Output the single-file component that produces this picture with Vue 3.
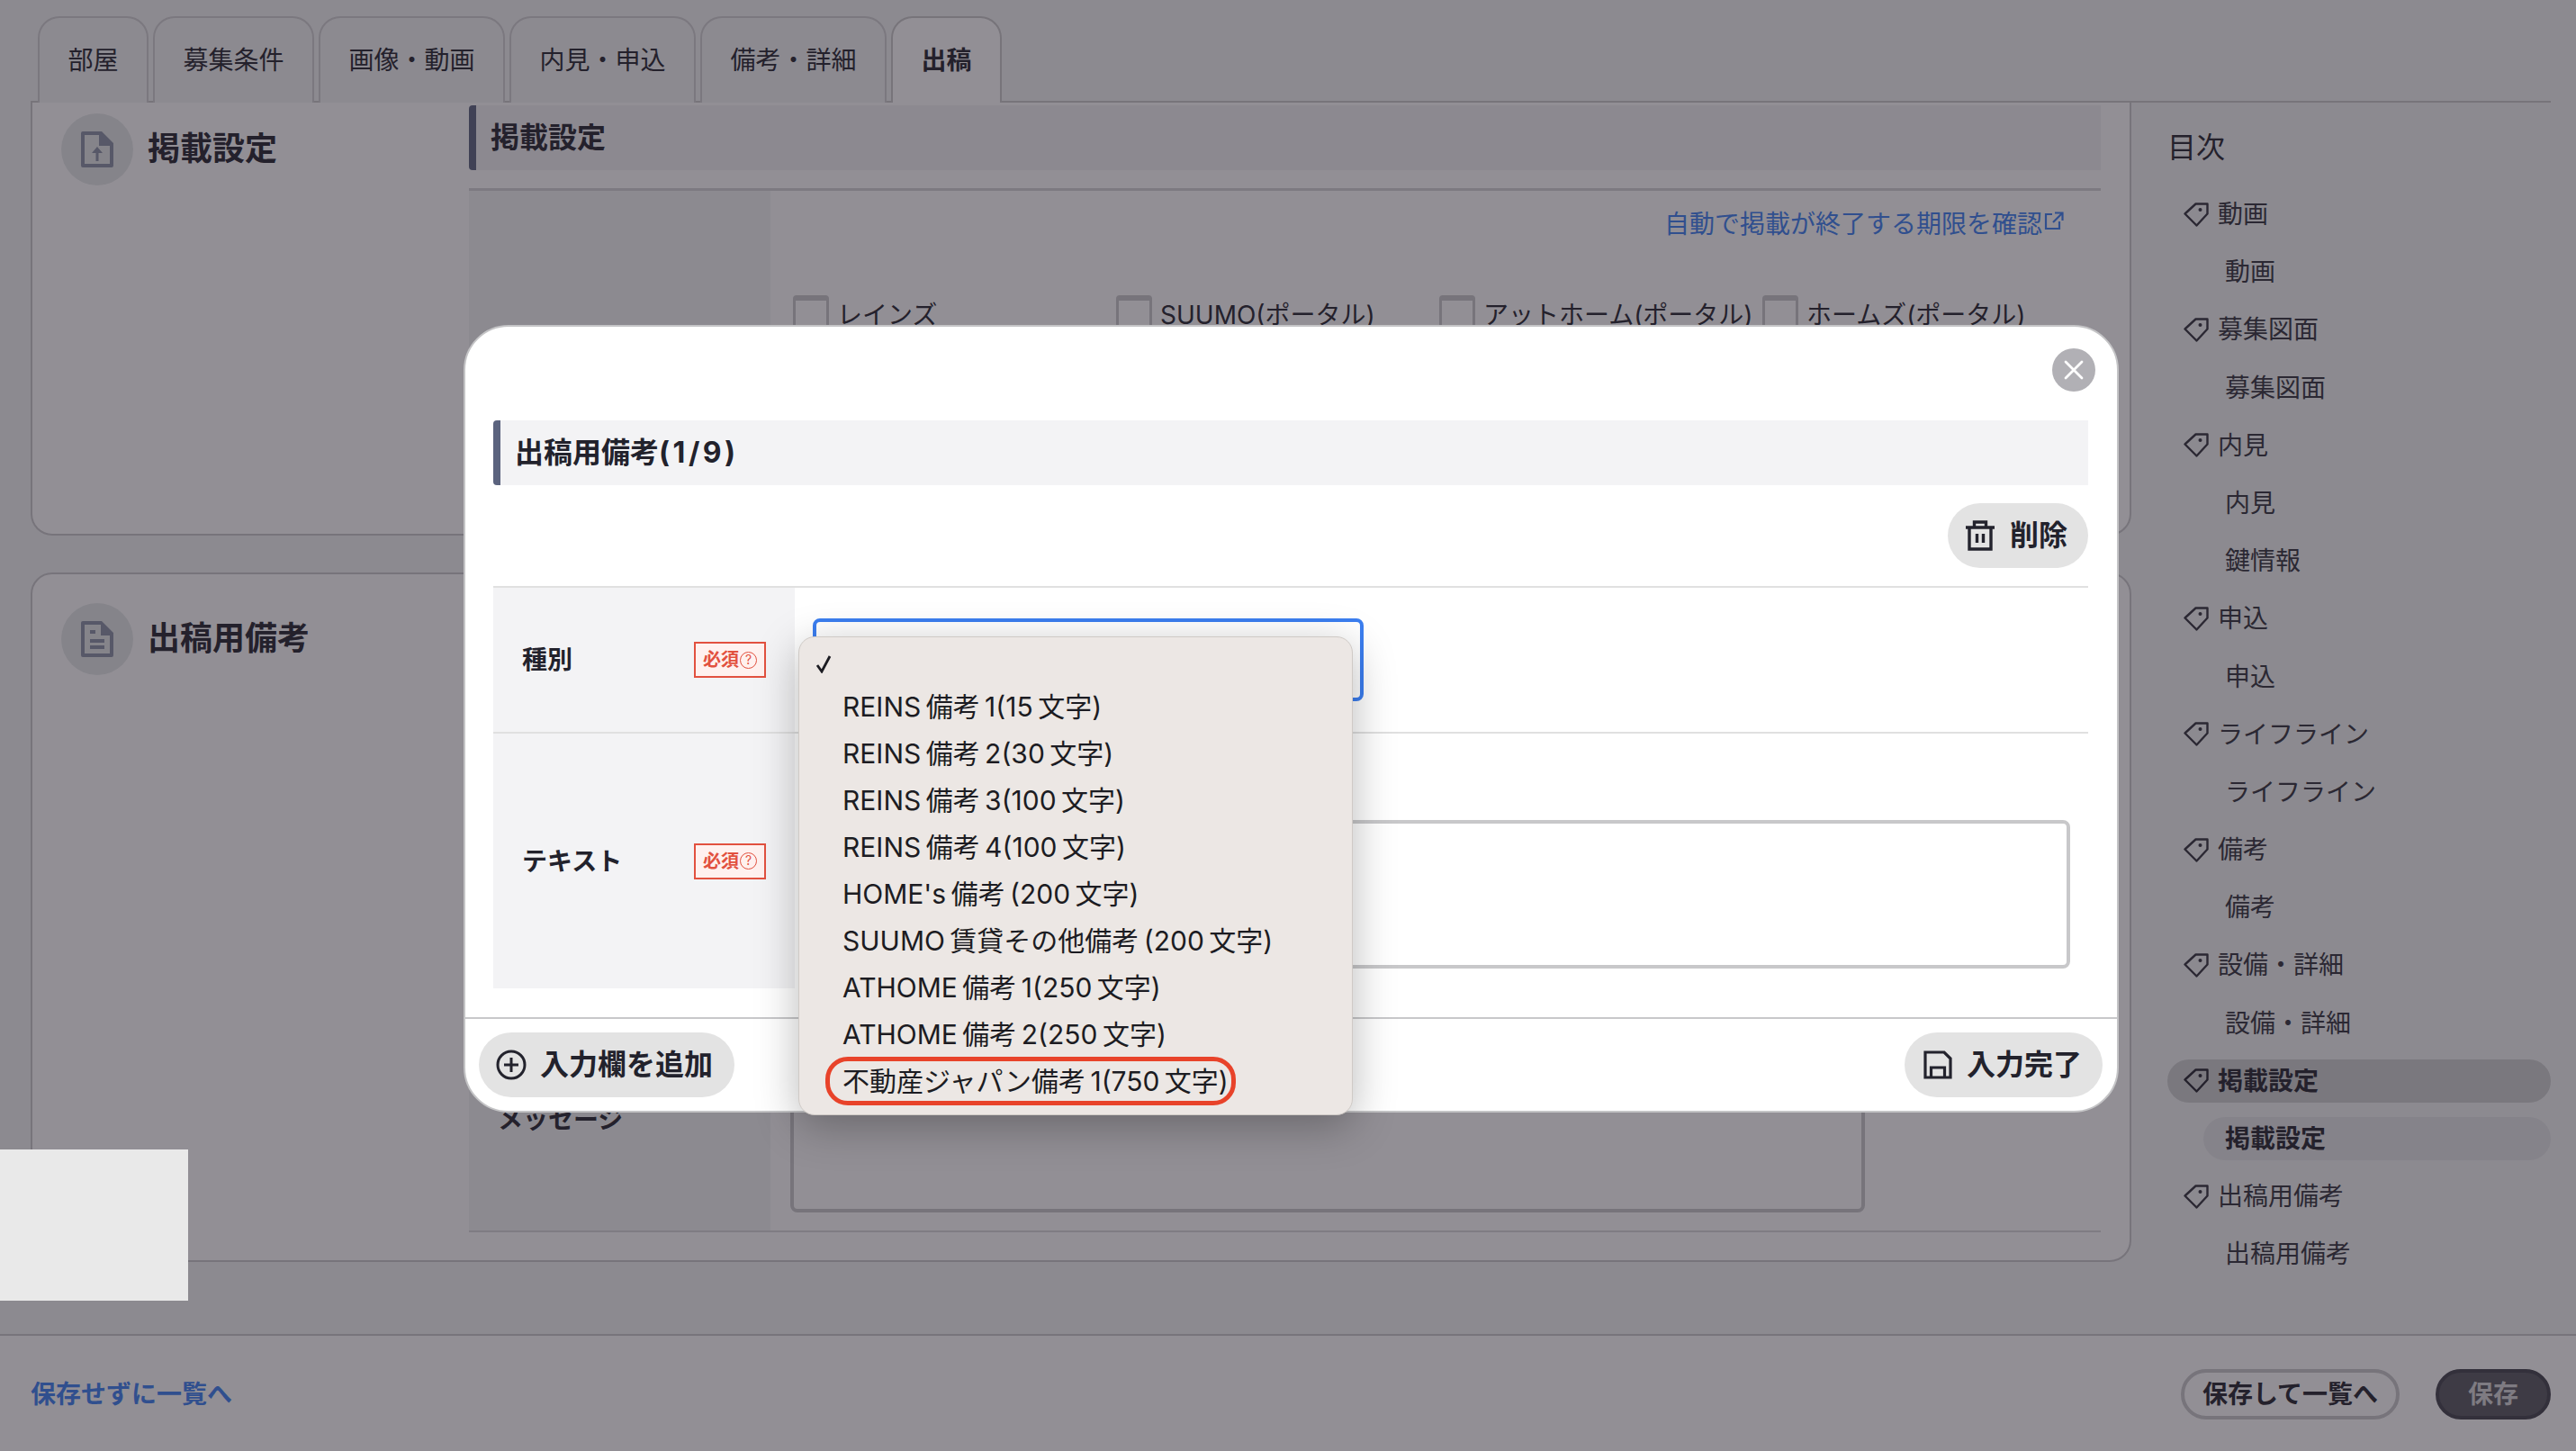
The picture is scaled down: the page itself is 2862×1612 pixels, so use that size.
<script setup>
const tabs = [
  { label: '部屋' },
  { label: '募集条件' },
  { label: '画像・動画' },
  { label: '内見・申込' },
  { label: '備考・詳細' },
  { label: '出稿', active: true },
]
const portals = ['レインズ', 'SUUMO(ポータル)', 'アットホーム(ポータル)', 'ホームズ(ポータル)']
const toc = [
  { label: '動画', sub: ['動画'] },
  { label: '募集図面', sub: ['募集図面'] },
  { label: '内見', sub: ['内見', '鍵情報'] },
  { label: '申込', sub: ['申込'] },
  { label: 'ライフライン', sub: ['ライフライン'] },
  { label: '備考', sub: ['備考'] },
  { label: '設備・詳細', sub: ['設備・詳細'] },
  { label: '掲載設定', sub: ['掲載設定'], active: true },
  { label: '出稿用備考', sub: ['出稿用備考'] },
]
const options = [
  'REINS 備考 1(15 文字)',
  'REINS 備考 2(30 文字)',
  'REINS 備考 3(100 文字)',
  'REINS 備考 4(100 文字)',
  "HOME's 備考 (200 文字)",
  'SUUMO 賃貸その他備考 (200 文字)',
  'ATHOME 備考 1(250 文字)',
  'ATHOME 備考 2(250 文字)',
]
</script>

<template>
  <div class="page">
    <main class="main">
      <nav class="tabs">
        <div v-for="t in tabs" :key="t.label" class="tab" :class="{ 'tab-active': t.active }">{{ t.label }}</div>
      </nav>
      <div class="columns">
        <div class="panels">
          <section class="panel panel-first">
            <div class="panel-head">
              <span class="head-icon">
                <svg width="36" height="40" viewBox="0 0 36 40">
                  <path fill-rule="evenodd" d="M2 0H23L36 13V38a2 2 0 0 1-2 2H2a2 2 0 0 1-2-2V2a2 2 0 0 1 2-2ZM4 4V36H32V16H20V4Z" />
                  <path d="M18 17l6 7h-4.500v9h-3v-9H12Z" />
                </svg>
              </span>
              <h2 class="panel-title">掲載設定</h2>
            </div>
            <div class="panel-content">
              <h3 class="bar-title">掲載設定</h3>
              <div class="form-row form-row-fill">
                <div class="form-label"></div>
                <div class="form-cell">
                  <div class="link-line">
                    <span>自動で掲載が終了する期限を確認</span>
                    <svg class="ext" width="22" height="20" viewBox="0 0 22 20" fill="none" stroke="currentColor" stroke-width="2.200">
                      <path d="M9 3H2V19H17V11M12 1.500h8.500V10M20.500 1.500 10 12" />
                    </svg>
                  </div>
                  <div class="checks">
                    <label v-for="p in portals" :key="p" class="check">
                      <input type="checkbox" class="check-box" />
                      <span class="check-text">{{ p }}</span>
                    </label>
                  </div>
                </div>
              </div>
            </div>
          </section>

          <section class="panel panel-second">
            <div class="panel-head">
              <span class="head-icon">
                <svg width="36" height="40" viewBox="0 0 36 40">
                  <path fill-rule="evenodd" d="M2 0H23L36 13V38a2 2 0 0 1-2 2H2a2 2 0 0 1-2-2V2a2 2 0 0 1 2-2ZM4 4V36H32V16H22V4Z" />
                  <path d="M10 10h6v4h-6ZM10 20h16v4H10ZM10 27h16v4H10Z" />
                </svg>
              </span>
              <h2 class="panel-title">出稿用備考</h2>
            </div>
            <div class="panel-content panel-content-end">
              <div class="form-row message-row">
                <div class="form-label message-label">メッセージ</div>
                <div class="form-cell message-cell">
                  <div class="message-box"></div>
                </div>
              </div>
            </div>
          </section>
        </div>

        <aside class="toc">
          <div class="toc-title">目次</div>
          <ul class="toc-list">
            <template v-for="g in toc" :key="g.label">
              <li class="toc-item" :class="{ 'toc-item-active': g.active }">
                <svg class="tag" width="28" height="27" viewBox="0 0 28 27" fill="none" stroke="currentColor" stroke-width="2.400" stroke-linejoin="round">
                  <path d="M1.500 12.500 13.500 1.500H26.500V12.500L14.500 25.500Z" />
                  <circle cx="18.500" cy="8" r="2" fill="currentColor" stroke="none" />
                </svg>
                <span>{{ g.label }}</span>
              </li>
              <li v-for="s in g.sub" :key="s" class="toc-sub" :class="{ 'toc-sub-active': g.active }">{{ s }}</li>
            </template>
          </ul>
        </aside>
      </div>
    </main>

    <footer class="footer">
      <span class="back-link">保存せずに一覧へ</span>
      <div class="footer-actions">
        <button class="btn-outline">保存して一覧へ</button>
        <button class="btn-save">保存</button>
      </div>
    </footer>

    <div class="overlay"></div>
    <div class="corner-block"></div>

    <div class="modal">
      <button class="close" aria-label="閉じる">
        <svg width="22" height="22" viewBox="0 0 22 22" fill="none" stroke="#fff" stroke-width="2.800" stroke-linecap="round">
          <path d="M2 2 20 20M20 2 2 20" />
        </svg>
      </button>
      <div class="modal-body">
        <h3 class="bar-title">出稿用備考<span class="count">(1/9)</span></h3>
        <div class="delete-line">
          <button class="pill pill-delete">
            <svg width="32" height="34" viewBox="0 0 32 34" fill="none" stroke="#23232d" stroke-width="3.400">
              <path d="M0 8H32M4 8V32H28V8M9.500 8V2H22.500V8M12.500 15V25M19.500 15V25" />
            </svg>
            <span>削除</span>
          </button>
        </div>
        <div class="m-table">
          <div class="m-row m-row-type">
            <div class="m-label">
              <span>種別</span>
              <span class="req">必須<i class="req-q">?</i></span>
            </div>
            <div class="m-cell">
              <div class="select">
                <div class="dropdown">
                  <div class="opt opt-checked">
                    <svg width="20" height="20" viewBox="0 0 20 20" fill="none" stroke="#1c1c22" stroke-width="2.800">
                      <path d="M2 11 7 18 16 1" />
                    </svg>
                  </div>
                  <div v-for="o in options" :key="o" class="opt"><span>{{ o }}</span></div>
                  <div class="opt"><span class="opt-ring">不動産ジャパン備考 1(750 文字)</span></div>
                </div>
              </div>
            </div>
          </div>
          <div class="m-row m-row-text">
            <div class="m-label">
              <span>テキスト</span>
              <span class="req">必須<i class="req-q">?</i></span>
            </div>
            <div class="m-cell m-cell-text">
              <div class="textbox"></div>
            </div>
          </div>
        </div>
      </div>
      <div class="modal-foot">
        <button class="pill pill-add">
          <svg width="34" height="34" viewBox="0 0 34 34" fill="none" stroke="#23232d" stroke-width="3">
            <circle cx="17" cy="17" r="15" />
            <path d="M17 9V25M9 17H25" />
          </svg>
          <span>入力欄を追加</span>
        </button>
        <button class="pill pill-done">
          <svg width="32" height="32" viewBox="0 0 32 32" fill="none" stroke="#23232d" stroke-width="3.200">
            <path d="M2 2H23L30 9V30H2Z" />
            <path d="M8.500 30V19H23.500V30" />
          </svg>
          <span>入力完了</span>
        </button>
      </div>
    </div>
  </div>
</template>

<style scoped>
.page {
  position: relative;
  width: 2862px;
  height: 1612px;
  overflow: hidden;
  display: flex;
  flex-direction: column;
  background: #f3f5f5;
  color: #22222c;
  font-family: Inter, "Noto Sans CJK JP", sans-serif;
  font-size: 28px;
  line-height: 40px;
}
button { font-family: inherit; border: none; padding: 0; cursor: pointer; }
h2, h3, ul { margin: 0; padding: 0; }

.main { height: 1482px; flex: none; }
.tabs {
  display: flex;
  gap: 5px;
  height: 114px;
  box-sizing: border-box;
  margin: 0 28px 0 34px;
  padding: 18px 0 0 8px;
  border-bottom: 2px solid #c8c8c8;
}
.tab {
  height: 96px;
  box-sizing: border-box;
  padding: 0 31.500px;
  display: flex;
  align-items: center;
  border: 2px solid #d0d0d2;
  border-bottom: none;
  border-radius: 24px 24px 0 0;
  background: #f3f5f5;
}
.tab-active { background: #fff; font-weight: 700; border-color: #c8c8c8; }

.columns { display: flex; }
.panels { width: 2334px; margin-left: 34px; flex: none; display: flex; flex-direction: column; gap: 41px; }
.panel {
  display: flex;
  box-sizing: border-box;
  background: #fff;
  border: 2px solid #c8c8ca;
  padding-right: 32px;
}
.panel-first { height: 481px; border-top: none; border-radius: 0 0 24px 24px; }
.panel-second { height: 766px; border-radius: 24px; padding-bottom: 31px; }
.panel-head {
  width: 485px;
  flex: none;
  box-sizing: border-box;
  display: flex;
  align-items: flex-start;
  gap: 16px;
  padding: 12px 0 0 32px;
}
.panel-second .panel-head { padding-top: 32px; }
.head-icon {
  width: 80px;
  height: 80px;
  border-radius: 50%;
  background: #e5e9e9;
  display: flex;
  align-items: center;
  justify-content: center;
  flex: none;
}
.head-icon svg { fill: #8890a4; }
.panel-title { font-size: 36px; font-weight: 700; line-height: 78px; }
.panel-content { flex: 1; min-width: 0; padding-top: 3px; display: flex; flex-direction: column; }
.panel-content-end { justify-content: flex-end; padding-top: 0; }

.bar-title {
  height: 72px;
  box-sizing: border-box;
  display: flex;
  align-items: center;
  padding-left: 16px;
  border-left: 8px solid #5b637e;
  border-radius: 4px 0 0 4px;
  background: #f3f3f5;
  font-size: 32px;
  font-weight: 700;
}
.count { letter-spacing: 3.500px; }
.form-row { display: flex; border-top: 3px solid #cfcfd1; }
.form-row-fill { margin-top: 20px; flex: 1; border-top-color: #d4d4d6; }
.form-label { width: 335px; flex: none; background: #f3f5f5; }
.form-cell { flex: 1; min-width: 0; }
.link-line {
  display: flex;
  justify-content: flex-end;
  align-items: center;
  padding: 17px 41px 0 0;
  color: #3b7ef0;
}
.ext { margin: -8px 0 0 2px; }
.checks { display: grid; grid-template-columns: repeat(4, 359px); margin: 56px 0 0 25px; }
.check { display: flex; align-items: center; gap: 9px; }
.check-text { padding-top: 5px; }
.check-box {
  appearance: none;
  margin: 0;
  width: 40px;
  height: 40px;
  box-sizing: border-box;
  border: 3px solid #c8c8ca;
  border-top-width: 6px;
  border-radius: 4px;
  background: #fff;
}

.message-row {
  height: 254px;
  box-sizing: border-box;
  border-top: none;
  border-bottom: 2px solid #d8d8da;
  flex: none;
}
.message-label {
  display: flex;
  align-items: center;
  padding: 6px 0 0 32px;
  box-sizing: border-box;
  font-weight: 700;
}
.message-cell { padding: 22px 0 20px 22px; box-sizing: border-box; }
.message-box {
  width: 1194px;
  height: 100%;
  box-sizing: border-box;
  border: 4px solid #c8c8ca;
  border-radius: 8px;
  background: #fff;
}

.toc { flex: 1; padding: 24px 28px 0 40px; min-width: 0; }
.toc-title { font-size: 32px; line-height: 52px; margin-bottom: 24px; }
.toc-list { list-style: none; display: flex; flex-direction: column; gap: 16.200px; }
.toc-item, .toc-sub {
  height: 48px;
  display: flex;
  align-items: center;
  border-radius: 24px;
  color: #30303a;
}
.toc-item { padding-left: 18px; gap: 10px; }
.tag { flex: none; }
.toc-sub { margin-left: 40px; padding-left: 24px; }
.toc-item-active { background: #cfd1d1; font-weight: 700; color: #22222c; }
.toc-sub-active { background: #e5e7e9; font-weight: 700; color: #22222c; }

.footer {
  flex: 1;
  box-sizing: border-box;
  background: #fff;
  border-top: 2px solid #c8c8ca;
  padding: 2px 28px 0 34px;
  display: flex;
  justify-content: space-between;
  align-items: center;
}
.back-link { color: #3b7ef0; font-weight: 700; }
.footer-actions { display: flex; gap: 40px; }
.btn-outline, .btn-save {
  height: 56px;
  box-sizing: border-box;
  border-radius: 28px;
  font-size: 28px;
  line-height: 40px;
  font-weight: 700;
}
.btn-outline {
  width: 243px;
  border: 4px solid #c8c8ca;
  background: #fff;
  color: #22222c;
}
.btn-save {
  width: 128px;
  border: 4px solid #41414b;
  background: #56565f;
  color: #d6d7d8;
}

.overlay {
  position: absolute;
  inset: 0;
  background: rgba(37, 31, 43, 0.5);
}
.corner-block {
  position: absolute;
  left: 0;
  top: 1277px;
  width: 209px;
  height: 168px;
  background: #e9e9e9;
}

.modal {
  position: absolute;
  left: 515px;
  top: 361px;
  width: 1839px;
  height: 875px;
  box-sizing: border-box;
  border: 2px solid #c4c4c6;
  border-radius: 50px;
  background: #fff;
  display: flex;
  flex-direction: column;
}
.close {
  position: absolute;
  right: 24px;
  top: 24px;
  width: 48px;
  height: 48px;
  border-radius: 50%;
  background: #b1b0b5;
  display: flex;
  align-items: center;
  justify-content: center;
}
.modal-body { padding: 104px 32px 0 31px; flex: 1; min-height: 0; }
.delete-line { display: flex; justify-content: flex-end; margin: 20px 0; }
.pill {
  height: 72px;
  border-radius: 36px;
  background: #e3e3e3;
  color: #22222c;
  display: flex;
  align-items: center;
  font-size: 32px;
  line-height: 44px;
  font-weight: 700;
}
.pill-delete { width: 156px; padding-left: 20px; gap: 17px; }
.m-table { border-top: 2px solid #e0e0e0; }
.m-row { display: flex; }
.m-row-type { height: 160px; border-bottom: 2px solid #e0e0e0; }
.m-row-text { height: 283px; }
.m-label {
  width: 335px;
  flex: none;
  box-sizing: border-box;
  padding: 0 32px;
  background: #f3f3f5;
  display: flex;
  align-items: center;
  justify-content: space-between;
  font-weight: 700;
}
.req {
  width: 80px;
  height: 40px;
  box-sizing: border-box;
  border: 2px solid #e2513f;
  background: #fff1ef;
  color: #e2513f;
  font-size: 20px;
  line-height: 36px;
  display: flex;
  align-items: center;
  justify-content: center;
  gap: 1px;
}
.req-q {
  width: 19px;
  height: 19px;
  box-sizing: border-box;
  border: 1.500px solid #e2513f;
  border-radius: 50%;
  font-style: normal;
  font-weight: 400;
  font-size: 14px;
  line-height: 16px;
  text-align: center;
}
.m-cell { flex: 1; min-width: 0; padding-left: 20px; display: flex; align-items: center; }
.m-cell-text { align-items: flex-start; padding: 96px 20px 0 20px; }
.select {
  position: relative;
  width: 612px;
  height: 92px;
  box-sizing: border-box;
  border: 4px solid #3b7ef0;
  border-radius: 8px;
  background: #fff;
}
.dropdown {
  position: absolute;
  left: -20px;
  top: 16px;
  width: 616px;
  height: 532px;
  box-sizing: border-box;
  padding-top: 1px;
  background: #ece7e4;
  border: 1px solid #cfcac6;
  border-radius: 18px;
  box-shadow: 0 12px 48px rgba(0, 0, 0, 0.28);
  font-size: 30px;
  word-spacing: -3px;
  color: #1c1c22;
  z-index: 2;
}
.opt { height: 52px; display: flex; align-items: center; padding-left: 48px; white-space: nowrap; }
.opt > span { position: relative; top: -2px; }
.opt-checked { padding: 5px 0 0 18px; box-sizing: border-box; }
.opt-ring {
  height: 44px;
  display: flex;
  align-items: center;
  padding: 0 3px 0 14px;
  margin-left: -14px;
  outline: 5px solid #e8432a;
  border-radius: 20px;
}
.textbox {
  width: 100%;
  height: 165px;
  box-sizing: border-box;
  border: 4px solid #c8c8ca;
  border-radius: 8px;
  background: #fff;
}
.modal-foot {
  height: 104px;
  flex: none;
  box-sizing: border-box;
  border-top: 2px solid #c8c8ca;
  padding: 15px 16px 0 15px;
  display: flex;
  justify-content: space-between;
  align-items: flex-start;
}
.pill-add { width: 284px; padding-left: 19px; gap: 15px; }
.pill-done { width: 220px; padding-left: 21px; gap: 16px; }
</style>
